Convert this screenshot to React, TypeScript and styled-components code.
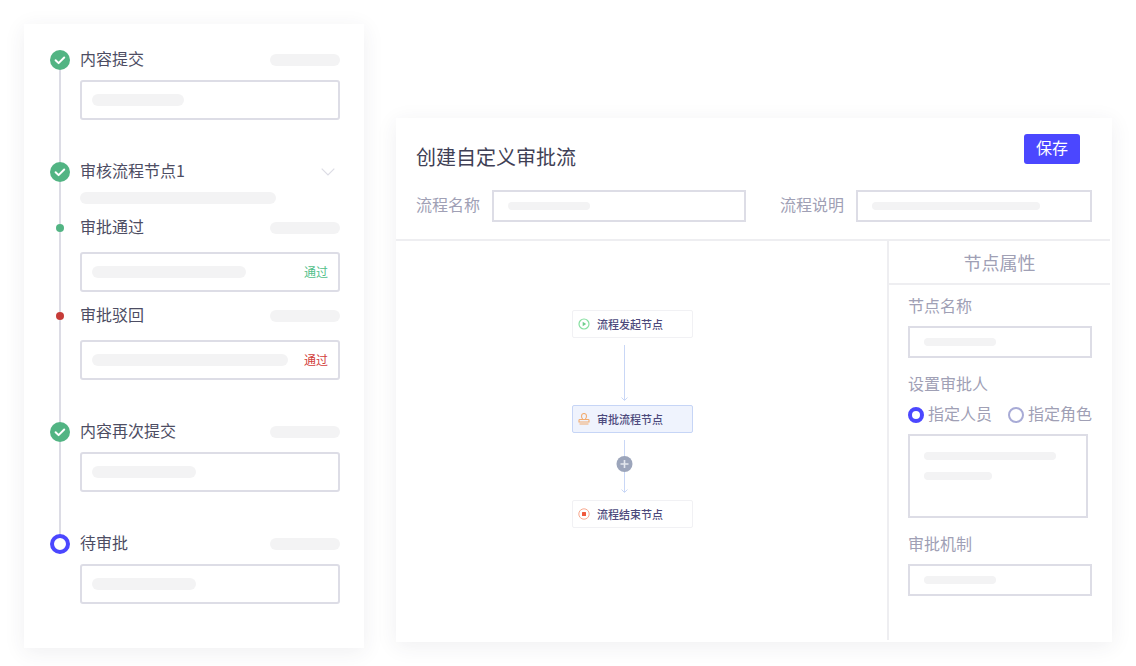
import React from 'react';
import styled, { createGlobalStyle } from 'styled-components';

const Global = createGlobalStyle`
  html, body { margin: 0; padding: 0; background: #fff; }
  * { box-sizing: border-box; }
  body { font-family: "Noto Sans CJK SC", "Noto Sans", sans-serif; }
`;

const Page = styled.div`
  width: 1136px;
  height: 666px;
  overflow: hidden;
  display: flex;
  align-items: flex-start;
  gap: 32px;
  padding: 24px 0 0 24px;
`;

const Card = styled.section`
  background: #fff;
  box-shadow: 0 4px 20px rgba(50, 50, 80, 0.08);
`;

/* ---------- left timeline ---------- */
const TimelineCard = styled(Card)`
  width: 340px;
  height: 624px;
  padding: 26px 24px 0 26px;
`;

const Step = styled.div`
  display: grid;
  grid-template-columns: 20px 1fr;
  column-gap: 10px;
`;

const Rail = styled.div`
  display: flex;
  flex-direction: column;
  align-items: center;
`;

const RailLine = styled.div<{ $fixed?: number }>`
  width: 2px;
  background: #dcdce5;
  flex: ${(p) => (p.$fixed ? `0 0 ${p.$fixed}px` : '1 1 0')};
`;

const SmallDot = styled.div<{ $color: string }>`
  width: 8px;
  height: 8px;
  border-radius: 50%;
  background: ${(p) => p.$color};
  flex: none;
`;

const RingDot = styled.div`
  width: 20px;
  height: 20px;
  border-radius: 50%;
  border: 4px solid #4b47ff;
  flex: none;
`;

const StepBody = styled.div<{ $bottom: number }>`
  padding-bottom: ${(p) => p.$bottom}px;
`;

const StepHead = styled.div`
  height: 20px;
  display: flex;
  align-items: center;
  justify-content: space-between;
`;

const StepTitle = styled.span`
  font-size: 16px;
  line-height: 20px;
  padding-bottom: 4px;
  color: #4d4d63;
`;

const Bone = styled.div<{ $w: number; $h?: number }>`
  width: ${(p) => p.$w}px;
  height: ${(p) => p.$h ?? 12}px;
  border-radius: 6px;
  background: #f3f3f4;
  flex: none;
`;

const SubBone = styled(Bone)`
  margin-top: 10px;
`;

const StepBox = styled.div<{ $gap: number }>`
  height: 40px;
  margin-top: ${(p) => p.$gap}px;
  padding: 0 10px;
  border: 2px solid #dddde6;
  border-radius: 3px;
  display: flex;
  align-items: center;
  justify-content: space-between;
`;

const Verdict = styled.span<{ $color: string }>`
  font-size: 12px;
  line-height: 16px;
  color: ${(p) => p.$color};
`;

const Chevron = styled.svg`
  margin-right: 5px;
  flex: none;
`;

const CheckDot = () => (
  <svg width="20" height="20" viewBox="0 0 20 20" style={{ flex: 'none' }}>
    <circle cx="10" cy="10" r="10" fill="#52b483" />
    <path d="M5.6 10.2l3 2.9 5.6-5.6" fill="none" stroke="#fff" strokeWidth="2" strokeLinecap="round" strokeLinejoin="round" />
  </svg>
);

/* ---------- right editor ---------- */
const EditorCard = styled(Card)`
  width: 716px;
  margin-top: 94px;
`;

const EditorHead = styled.div`
  padding: 16px 32px 0 20px;
  display: flex;
  justify-content: space-between;
  align-items: flex-start;
`;

const EditorTitle = styled.h1`
  margin: 9px 0 0;
  font-size: 20px;
  line-height: 28px;
  font-weight: 400;
  color: #3f3f55;
`;

const SaveButton = styled.button`
  width: 56px;
  height: 30px;
  padding: 0 0 4px;
  border: 0;
  border-radius: 3px;
  background: #4b47ff;
  color: #fff;
  font: 400 16px/24px "Noto Sans CJK SC", sans-serif;
`;

const MetaForm = styled.div`
  margin-top: 19px;
  padding: 0 20px 17px;
  display: flex;
  align-items: center;
`;

const MetaLabel = styled.span<{ $left?: number }>`
  margin: 0 12px 0 ${(p) => p.$left ?? 0}px;
  padding-bottom: 4px;
  font-size: 16px;
  line-height: 20px;
  color: #a0a0b5;
`;

const Field = styled.div<{ $w: number; $h?: number }>`
  width: ${(p) => p.$w}px;
  height: ${(p) => p.$h ?? 32}px;
  border: 2px solid #dddde6;
  padding: 0 14px;
  display: flex;
  align-items: center;
`;

const Rule = styled.div`
  height: 2px;
  margin-right: 2px;
  background: #eeeef1;
`;

const EditorBody = styled.div`
  height: 399px;
  margin-bottom: 2px;
  display: flex;
`;

const Canvas = styled.div`
  width: 491px;
  padding: 69px 0 0 176px;
`;

const FlowNode = styled.div<{ $active?: boolean }>`
  width: 121px;
  height: 28px;
  padding-left: 5px;
  display: flex;
  align-items: center;
  gap: 7px;
  border: 1px solid ${(p) => (p.$active ? '#c6d5f6' : '#f1f1f4')};
  border-radius: 2px;
  background: ${(p) => (p.$active ? '#eff3fd' : '#fff')};
`;

const FlowLabel = styled.span`
  font-size: 11px;
  line-height: 14px;
  font-weight: 500;
  color: #4d4a7c;
`;

const Arrow = styled.svg`
  display: block;
  margin-left: 43px;
`;

const SidePanel = styled.div`
  width: 223px;
  border-left: 2px solid #eeeef1;
  margin-right: 2px;
`;

const PanelTitle = styled.div`
  height: 44px;
  padding-bottom: 2px;
  border-bottom: 2px solid #eeeef1;
  text-align: center;
  font-size: 18px;
  line-height: 43px;
  color: #a0a0b5;
`;

const PanelForm = styled.div`
  padding: 10px 18px 0 19px;
`;

const PanelLabel = styled.div<{ $top?: number }>`
  margin: ${(p) => p.$top ?? 0}px 0 11px;
  font-size: 16px;
  line-height: 20px;
  color: #a0a0b5;
`;

const RadioRow = styled.div`
  margin: -11px 0 9px;
  padding-top: 12px;
  display: flex;
  align-items: center;
`;

const Radio = styled.span<{ $on?: boolean }>`
  width: 16px;
  height: 16px;
  border-radius: 50%;
  border: ${(p) => (p.$on ? '4px solid #4b47ff' : '2px solid #a8abd6')};
  margin-right: 4px;
  flex: none;
`;

const RadioText = styled.span`
  height: 20px;
  font-size: 16px;
  line-height: 16px;
  color: #a0a0b5;
  margin-right: 16px;
  &:last-child { margin-right: 0; }
`;

const AreaField = styled(Field)`
  flex-direction: column;
  align-items: flex-start;
  gap: 12px;
  padding-top: 16px;
`;

const StartIcon = () => (
  <svg width="12" height="12" viewBox="0 0 12 12" style={{ flex: 'none' }}>
    <circle cx="6" cy="6" r="5" fill="none" stroke="#86dfa0" strokeWidth="1.2" />
    <path d="M4.7 3.8v4.4L8.2 6z" fill="#6fce8c" />
  </svg>
);

const StampIcon = () => (
  <svg width="12" height="12" viewBox="0 0 12 12" style={{ flex: 'none' }}>
    <path d="M4.4 6.5V5.6C3.6 5 3.5 4.3 3.5 3A2.5 2.5 0 018.5 3c0 1.3-.1 2-.9 2.6v.9M1 9V7.2c0-.4.2-.7.7-.7h8.6c.5 0 .7.3.7.7V9zM1.5 11h9" fill="none" stroke="#f2ac70" strokeWidth="1.1" />
  </svg>
);

const EndIcon = () => (
  <svg width="12" height="12" viewBox="0 0 12 12" style={{ flex: 'none' }}>
    <circle cx="6" cy="6" r="5.2" fill="none" stroke="#f7a98f" strokeWidth="1" />
    <rect x="4" y="4" width="4" height="4" fill="#f0593b" rx="0.5" />
  </svg>
);

const App = () => (
  <Page>
    <Global />
    <TimelineCard>
      <Step>
        <Rail><CheckDot /><RailLine /></Rail>
        <StepBody $bottom={42}>
          <StepHead><StepTitle>内容提交</StepTitle><Bone $w={70} /></StepHead>
          <StepBox $gap={10}><Bone $w={92} /></StepBox>
        </StepBody>
      </Step>
      <Step>
        <Rail><CheckDot /><RailLine /></Rail>
        <StepBody $bottom={14}>
          <StepHead>
            <StepTitle>审核流程节点1</StepTitle>
            <Chevron width="14" height="8" viewBox="0 0 14 8">
              <path d="M.7.7L7 7l6.3-6.3" fill="none" stroke="#dcdce5" strokeWidth="1.2" />
            </Chevron>
          </StepHead>
          <SubBone $w={196} />
        </StepBody>
      </Step>
      <Step>
        <Rail><RailLine $fixed={6} /><SmallDot $color="#52b483" /><RailLine /></Rail>
        <StepBody $bottom={14}>
          <StepHead><StepTitle>审批通过</StepTitle><Bone $w={70} /></StepHead>
          <StepBox $gap={14}><Bone $w={154} /><Verdict $color="#52c08a">通过</Verdict></StepBox>
        </StepBody>
      </Step>
      <Step>
        <Rail><RailLine $fixed={6} /><SmallDot $color="#c63c38" /><RailLine /></Rail>
        <StepBody $bottom={42}>
          <StepHead><StepTitle>审批驳回</StepTitle><Bone $w={70} /></StepHead>
          <StepBox $gap={14}><Bone $w={196} /><Verdict $color="#d2403c">通过</Verdict></StepBox>
        </StepBody>
      </Step>
      <Step>
        <Rail><CheckDot /><RailLine /></Rail>
        <StepBody $bottom={42}>
          <StepHead><StepTitle>内容再次提交</StepTitle><Bone $w={70} /></StepHead>
          <StepBox $gap={10}><Bone $w={104} /></StepBox>
        </StepBody>
      </Step>
      <Step>
        <Rail><RingDot /></Rail>
        <StepBody $bottom={0}>
          <StepHead><StepTitle>待审批</StepTitle><Bone $w={70} /></StepHead>
          <StepBox $gap={10}><Bone $w={104} /></StepBox>
        </StepBody>
      </Step>
    </TimelineCard>

    <EditorCard>
      <EditorHead>
        <EditorTitle>创建自定义审批流</EditorTitle>
        <SaveButton>保存</SaveButton>
      </EditorHead>
      <MetaForm>
        <MetaLabel>流程名称</MetaLabel>
        <Field $w={254}><Bone $w={82} $h={8} /></Field>
        <MetaLabel $left={34}>流程说明</MetaLabel>
        <Field $w={236}><Bone $w={168} $h={8} /></Field>
      </MetaForm>
      <Rule />
      <EditorBody>
        <Canvas>
          <FlowNode><StartIcon /><FlowLabel>流程发起节点</FlowLabel></FlowNode>
          <Arrow width="20" height="67" viewBox="0 0 20 67">
            <path d="M9.5 7v55M6.5 59.5l3 3 3-3" fill="none" stroke="#c9d7f6" strokeWidth="1" />
          </Arrow>
          <FlowNode $active><StampIcon /><FlowLabel>审批流程节点</FlowLabel></FlowNode>
          <Arrow width="20" height="67" viewBox="0 0 20 67">
            <path d="M9.5 7v52M6.5 56.5l3 3 3-3" fill="none" stroke="#c9d7f6" strokeWidth="1" />
            <circle cx="9.5" cy="31" r="8" fill="#9ca5bb" />
            <path d="M5.5 31h8M9.5 27v8" stroke="#e4e7ee" strokeWidth="1.6" />
          </Arrow>
          <FlowNode><EndIcon /><FlowLabel>流程结束节点</FlowLabel></FlowNode>
        </Canvas>
        <SidePanel>
          <PanelTitle>节点属性</PanelTitle>
          <PanelForm>
            <PanelLabel>节点名称</PanelLabel>
            <Field $w={184}><Bone $w={72} $h={8} /></Field>
            <PanelLabel $top={15}>设置审批人</PanelLabel>
            <RadioRow>
              <Radio $on /><RadioText>指定人员</RadioText>
              <Radio /><RadioText>指定角色</RadioText>
            </RadioRow>
            <AreaField $w={180} $h={84}>
              <Bone $w={132} $h={8} />
              <Bone $w={68} $h={8} />
            </AreaField>
            <PanelLabel $top={15}>审批机制</PanelLabel>
            <Field $w={184}><Bone $w={72} $h={8} /></Field>
          </PanelForm>
        </SidePanel>
      </EditorBody>
    </EditorCard>
  </Page>
);

export default App;
